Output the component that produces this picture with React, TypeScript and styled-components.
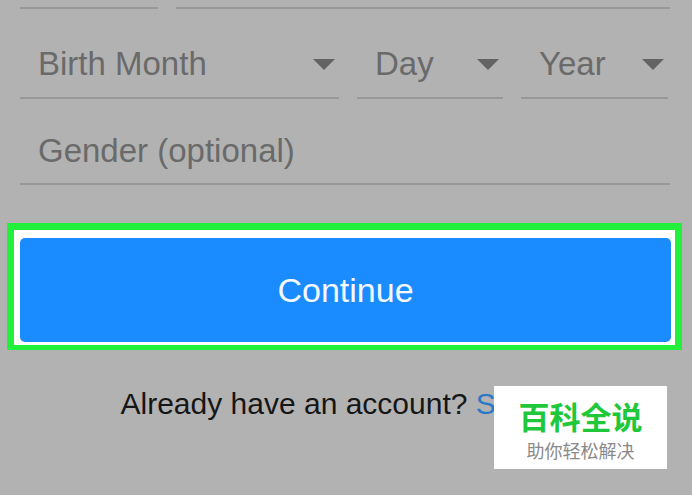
import styled, { createGlobalStyle } from "styled-components";

const GlobalStyle = createGlobalStyle`
  html, body {
    margin: 0;
    padding: 0;
    background: #b2b2b2;
    overflow: hidden;
  }
  body {
    font-family: "Liberation Sans", Arial, sans-serif;
  }
`;

const Page = styled.div`
  position: relative;
  width: 692px;
  height: 495px;
  background: #b2b2b2;
`;

const Form = styled.div`
  padding: 0 22px 0 20px;
`;

const Row = styled.div<{ gap?: number }>`
  display: flex;
  gap: ${({ gap = 18 }) => `${gap}px`};
`;

const Field = styled.div<{ width?: number; top: number; height: number }>`
  display: flex;
  align-items: flex-start;
  box-sizing: border-box;
  ${({ width }) => (width ? `width: ${width}px; flex: none;` : "flex: 1;")}
  height: ${({ height }) => `${height}px`};
  padding: ${({ top }) => `${top}px 4px 0 18px`};
  border-bottom: 2px solid #989898;
`;

const Placeholder = styled.span`
  flex: 1;
  font-size: 33px;
  line-height: 1;
  color: #6a6a6a;
  white-space: nowrap;
`;

const Caret = styled.span`
  width: 0;
  height: 0;
  margin-top: 12px;
  border-left: 11px solid transparent;
  border-right: 11px solid transparent;
  border-top: 11px solid #636363;
`;

const Highlight = styled.div`
  margin: 38px 10px 0 7px;
  border-style: solid;
  border-color: #22f03a;
  border-width: 7px 7px 5px 7px;
  background: #ffffff;
  padding: 8px 4px 3px 6px;
`;

const ContinueButton = styled.button`
  display: block;
  width: 100%;
  height: 104px;
  border: none;
  border-radius: 5px;
  background: #1a8cff;
  color: #f4f8ff;
  font-family: "Liberation Sans", Arial, sans-serif;
  font-size: 34px;
  padding: 0;
  cursor: pointer;
`;

const Footer = styled.p`
  margin: 39px 0 0;
  padding-right: 4px;
  text-align: center;
  font-size: 30px;
  line-height: 1;
  color: #161616;
`;

const SignIn = styled.a`
  color: #2a78c8;
  text-decoration: none;
`;

const Watermark = styled.div`
  position: absolute;
  left: 494px;
  top: 386px;
  width: 173px;
  height: 83px;
  background: #ffffff;
  display: flex;
  flex-direction: column;
  align-items: center;
  justify-content: center;
  font-family: "Noto Sans CJK SC", sans-serif;
`;

const BrandName = styled.div`
  margin-top: 3px;
  font-size: 31px;
  font-weight: 700;
  line-height: 1;
  color: #1ec83a;
`;

const Slogan = styled.div`
  margin-top: 10px;
  font-size: 18px;
  line-height: 1;
  color: #8a8a8a;
`;

export default function App() {
  return (
    <Page>
      <GlobalStyle />
      <Form>
        <Row>
          <Field width={138} top={0} height={9} />
          <Field top={0} height={9} />
        </Row>
        <Row gap={18}>
          <Field width={319} top={38} height={90}>
            <Placeholder>Birth Month</Placeholder>
            <Caret />
          </Field>
          <Field width={146} top={38} height={90}>
            <Placeholder>Day</Placeholder>
            <Caret />
          </Field>
          <Field width={147} top={38} height={90}>
            <Placeholder>Year</Placeholder>
            <Caret />
          </Field>
        </Row>
        <Row>
          <Field top={35} height={86}>
            <Placeholder>Gender (optional)</Placeholder>
          </Field>
        </Row>
      </Form>
      <Highlight>
        <ContinueButton>Continue</ContinueButton>
      </Highlight>
      <Footer>
        Already have an account? <SignIn href="#">Sign in</SignIn>
      </Footer>
      <Watermark>
        <BrandName>百科全说</BrandName>
        <Slogan>助你轻松解决</Slogan>
      </Watermark>
    </Page>
  );
}
